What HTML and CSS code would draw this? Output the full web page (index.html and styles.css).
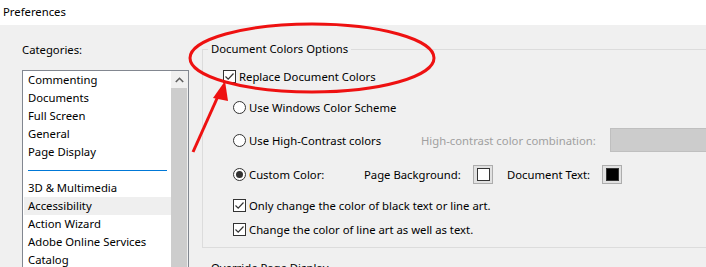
FILE: index.html
```html
<!DOCTYPE html>
<html>
<head>
<meta charset="utf-8">
<link rel="stylesheet" href="styles.css">
</head>
<body>
<div class="window">
  <div class="titlebar">Preferences</div>
  <div class="main">
    <div class="cats">
      <div class="cats-label">Categories:</div>
      <div class="listbox">
        <ul class="items">
          <li>Commenting</li>
          <li>Documents</li>
          <li>Full Screen</li>
          <li>General</li>
          <li>Page Display</li>
          <li class="sep"><span></span></li>
          <li>3D &amp; Multimedia</li>
          <li class="hover">Accessibility</li>
          <li>Action Wizard</li>
          <li>Adobe Online Services</li>
          <li>Catalog</li>
        </ul>
        <div class="scrollbar">
          <div class="sb-up">
            <svg width="9" height="6" viewBox="0 0 9 6"><polyline points="0.8,5 4.5,1.3 8.2,5" fill="none" stroke="#606060" stroke-width="1.6"/></svg>
          </div>
          <div class="sb-thumb"></div>
        </div>
      </div>
    </div>
    <div class="options">
      <fieldset class="group">
        <legend>Document Colors Options</legend>
        <div class="row row-replace">
          <span class="check"><svg width="11" height="11" viewBox="0 0 11 11"><polyline points="1.5,5.5 4.2,8.2 9.5,2.5" fill="none" stroke="#333" stroke-width="1.2"/></svg></span>
          <span class="lbl">Replace Document Colors</span>
        </div>
        <div class="row row-win">
          <span class="radio"></span>
          <span class="lbl">Use Windows Color Scheme</span>
        </div>
        <div class="row row-hc">
          <span class="opt-hc"><span class="radio"></span><span class="lbl">Use High-Contrast colors</span></span>
          <span class="hc-label">High-contrast color combination:</span>
          <span class="hc-combo"></span>
        </div>
        <div class="row row-custom">
          <span class="opt-custom"><span class="radio on"></span><span class="lbl">Custom Color:</span></span>
          <span class="sw-label-bg">Page Background:</span>
          <span class="swatch"><span class="swatch-in white"></span></span>
          <span class="sw-label-text">Document Text:</span>
          <span class="swatch"><span class="swatch-in black"></span></span>
        </div>
        <div class="row row-only">
          <span class="check"><svg width="11" height="11" viewBox="0 0 11 11"><polyline points="1.5,5.5 4.2,8.2 9.5,2.5" fill="none" stroke="#333" stroke-width="1.2"/></svg></span>
          <span class="lbl">Only change the color of black text or line art.</span>
        </div>
        <div class="row row-lineart">
          <span class="check"><svg width="11" height="11" viewBox="0 0 11 11"><polyline points="1.5,5.5 4.2,8.2 9.5,2.5" fill="none" stroke="#333" stroke-width="1.2"/></svg></span>
          <span class="lbl">Change the color of line art as well as text.</span>
        </div>
      </fieldset>
      <fieldset class="group group-next">
        <legend>Override Page Display</legend>
        <div class="row"></div>
      </fieldset>
    </div>
  </div>
  <svg class="annot" width="706" height="267" viewBox="0 0 706 267">
    <ellipse cx="312" cy="58" rx="122" ry="34" fill="none" stroke="#ee1111" stroke-width="3"/>
    <line x1="193" y1="152" x2="219" y2="94" stroke="#ee1111" stroke-width="3"/>
    <polygon points="225,81 213,98 228,101" fill="#ee1111"/>
  </svg>
</div>
</body>
</html>
```

FILE: styles.css
```css
* { box-sizing: border-box; }
html, body { margin: 0; padding: 0; }
body {
  width: 706px;
  height: 267px;
  overflow: hidden;
  background: #f0f0f0;
  font-family: "Noto Sans", "Segoe UI", sans-serif;
  font-size: 11.3px;
  color: #000;
}
.window { position: relative; width: 706px; height: 267px; overflow: hidden; }
.titlebar {
  height: 25px;
  background: #fff;
  padding-left: 3px;
  line-height: 24px;
  font-size: 11.3px;
}
.main { display: flex; height: 242px; }
.cats { width: 202px; flex: none; padding-left: 22px; }
.cats-label { margin-top: 17px; line-height: 16px; height: 16px; }
.listbox {
  margin-top: 12px;
  width: 167px;
  height: 220px;
  border: 1px solid #828790;
  background: #fff;
  display: flex;
}
.items { list-style: none; margin: 0; padding: 0; flex: 1; }
.items li {
  height: 18px;
  line-height: 18px;
  margin-left: 1px;
  padding-left: 4px;
  white-space: nowrap;
}
.items li.hover { background: #efefef; }
.items li.sep { display: flex; align-items: center; padding: 0 0 0 4px; }
.items li.sep span { display: block; width: 139px; height: 1px; background: #0078d7; }
.scrollbar { width: 17px; flex: none; display: flex; flex-direction: column; background: #f0f0f0; }
.sb-up { height: 17px; display: flex; align-items: center; justify-content: center; }
.sb-thumb { flex: 1; background: #cdcdcd; margin-right: 1px; }
.options { flex: 1; min-width: 0; }
.group {
  width: 620px;
  margin: 16px 0 0 0;
  padding: 0 0 9px 0;
  border: 1px solid #dcdcdc;
  min-width: 0;
}
.group legend { margin-left: 5px; padding: 0 3px; line-height: 16px; height: 16px; }
.row { display: flex; align-items: center; height: 18px; white-space: nowrap; margin-left: 30px; }
.row-replace { margin-left: 20px; margin-top: 10px; }
.row-win { margin-top: 13px; }
.row-hc { margin-top: 12px; height: 24px; }
.row-custom { margin-top: 12px; height: 20px; }
.row-only { margin-top: 12px; }
.row-lineart { margin-top: 6px; }
.check {
  width: 13px; height: 13px; flex: none;
  border: 1px solid #333;
  background: #fff;
  display: flex; align-items: center; justify-content: center;
}
.radio {
  width: 13px; height: 13px; flex: none;
  border: 1px solid #333;
  border-radius: 50%;
  background: #fff;
  display: flex; align-items: center; justify-content: center;
}
.radio.on::after { content: ""; width: 7px; height: 7px; border-radius: 50%; background: #333; }
.lbl { margin-left: 3px; }
.opt-hc { display: flex; align-items: center; width: 188px; flex: none; }
.hc-label { width: 189px; flex: none; color: #a0a0a0; }
.hc-combo { width: 200px; height: 24px; flex: none; background: #cccccc; border: 1px solid #bfbfbf; }
.opt-custom { display: flex; align-items: center; width: 131px; flex: none; }
.sw-label-bg { width: 109px; flex: none; }
.sw-label-text { width: 95px; flex: none; margin-left: 14px; }
.swatch {
  width: 20px; height: 19px; flex: none;
  border: 1px solid #adadad;
  background: #e1e1e1;
  display: flex; align-items: center; justify-content: center;
}
.swatch-in { width: 13px; height: 13px; border: 1px solid #333; }
.swatch-in.white { background: #fff; }
.swatch-in.black { background: #000; }
.group-next { margin-top: 12px; }
.annot { position: absolute; left: 0; top: 0; pointer-events: none; }
```
